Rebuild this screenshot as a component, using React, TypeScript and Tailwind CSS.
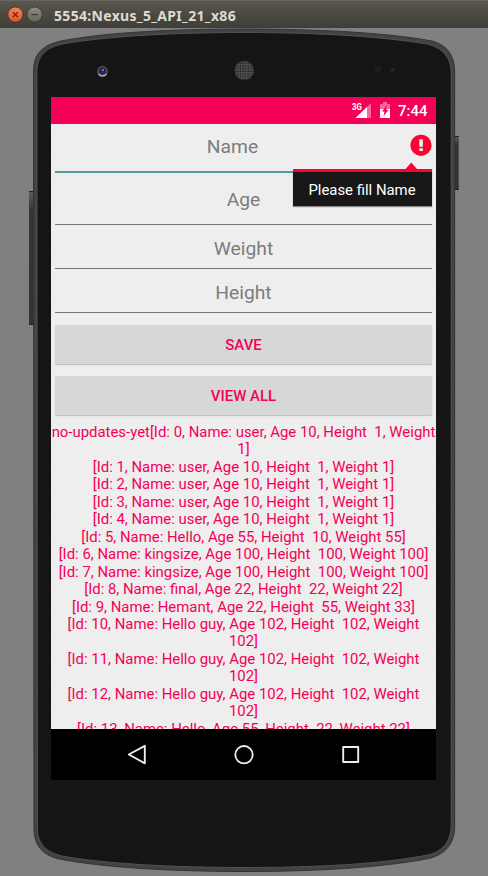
import React from "react";

const records = [
  "no-updates-yet[Id: 0, Name: user, Age 10, Height  1, Weight",
  "1]",
  "[Id: 1, Name: user, Age 10, Height  1, Weight 1]",
  "[Id: 2, Name: user, Age 10, Height  1, Weight 1]",
  "[Id: 3, Name: user, Age 10, Height  1, Weight 1]",
  "[Id: 4, Name: user, Age 10, Height  1, Weight 1]",
  "[Id: 5, Name: Hello, Age 55, Height  10, Weight 55]",
  "[Id: 6, Name: kingsize, Age 100, Height  100, Weight 100]",
  "[Id: 7, Name: kingsize, Age 100, Height  100, Weight 100]",
  "[Id: 8, Name: final, Age 22, Height  22, Weight 22]",
  "[Id: 9, Name: Hemant, Age 22, Height  55, Weight 33]",
  "[Id: 10, Name: Hello guy, Age 102, Height  102, Weight",
  "102]",
  "[Id: 11, Name: Hello guy, Age 102, Height  102, Weight",
  "102]",
  "[Id: 12, Name: Hello guy, Age 102, Height  102, Weight",
  "102]",
  "[Id: 13, Name: Hello, Age 55, Height  22, Weight 22]",
];

function TitleBar() {
  return (
    <header className="relative flex h-7 items-center border-t border-[#6a675f] bg-gradient-to-b from-[#59574e] to-[#3e3d37]">
      <svg width="50" height="27" viewBox="0 0 50 27">
        <defs>
          <linearGradient id="close" x1="0" y1="0" x2="0" y2="1">
            <stop offset="0" stopColor="#f68563" />
            <stop offset="1" stopColor="#e0501f" />
          </linearGradient>
          <linearGradient id="mini" x1="0" y1="0" x2="0" y2="1">
            <stop offset="0" stopColor="#8f8c82" />
            <stop offset="1" stopColor="#65635b" />
          </linearGradient>
        </defs>
        <circle cx="15.4" cy="13.6" r="7.6" fill="url(#close)" stroke="#37332d" strokeWidth=".8" />
        <path d="M12.9 11.1l5 5m0-5l-5 5" stroke="#48271b" strokeWidth="1.2" />
        <circle cx="34.6" cy="13.6" r="7.6" fill="url(#mini)" stroke="#37352f" strokeWidth=".8" />
        <path d="M31.3 13.6h6.6" stroke="#37352f" strokeWidth="1.2" />
      </svg>
      <h1 className="ml-[4px] mt-[2px] whitespace-nowrap font-['Noto_Sans',sans-serif] text-[14px] font-bold leading-none tracking-[0.32px] text-[#dfdbd2]">
        5554:Nexus_5_API_21_x86
      </h1>
    </header>
  );
}

const outline =
  "M33.5 72C33.5 53 43 45 61 41C108 32 176 29 244 29C322 29 389 33 432 41C447 45 454.7 55 454.7 72V826C454.7 845 444 854 431 858C382 868 312 871.5 244 871.5C176 871.5 106 868 59 859C42 855 34 845 34 828Z";
const face =
  "M36.9 73C36.9 56 45 48 62 44C108 36 176 32.5 244 32.5C322 32.5 385 37 427 44C443 48 451.2 57 451.2 74V825C451.2 842 442 851 430 854.5C382 864.5 312 867.5 244 867.5C176 867.5 106 864 62 856C45 852 37.4 843 37.4 828Z";

function DeviceBody() {
  return (
    <svg className="absolute left-0 top-0" width="488" height="876" viewBox="0 0 488 876">
      <defs>
        <linearGradient id="rail" x1="0" y1="0" x2="0" y2="1">
          <stop offset="0" stopColor="#5f6062" />
          <stop offset=".15" stopColor="#333437" />
          <stop offset="1" stopColor="#333" />
        </linearGradient>
        <pattern id="grain" width="3" height="3" patternUnits="userSpaceOnUse">
          <rect width="3" height="3" fill="#141414" />
          <path d="M0 .5h1M2 1.5h1M1 2.5h1" stroke="#171717" />
        </pattern>
        <pattern id="mesh" width="2.6" height="2.6" patternUnits="userSpaceOnUse">
          <rect width="2.6" height="2.6" fill="#5a5a5a" />
          <rect x=".4" y=".4" width="1.6" height="1.6" fill="#191919" />
        </pattern>
      </defs>
      <rect x="29" y="191" width="6" height="134" fill="url(#rail)" />
      <path d="M29 191.5h6M29 324.5h6" stroke="#222" />
      <rect x="453" y="136" width="5.7" height="54" fill="url(#rail)" />
      <path d="M454 136.5h5M454 189.5h5" stroke="#222" />
      <path d={outline} fill="#424345" />
      <path d={outline} fill="none" stroke="#333436" strokeWidth="1" />
      <path d={face} fill="url(#grain)" stroke="#505255" strokeWidth="1" />
      <circle cx="102.4" cy="71.2" r="5.4" fill="#4e4e52" />
      <path d="M98.5 74a5 5 0 0 0 8 0" fill="none" stroke="#a8a8a8" strokeWidth="1.3" />
      <circle cx="102.4" cy="70.8" r="3.5" fill="#24243f" />
      <circle cx="102" cy="71" r="1.9" fill="#25259a" />
      <circle cx="103" cy="70" r=".8" fill="#c8c8ee" />
      <circle cx="244.2" cy="70.5" r="9.6" fill="url(#mesh)" stroke="#303030" strokeWidth=".7" />
      <circle cx="378" cy="69.5" r="3.7" fill="#201c1d" />
      <circle cx="392.4" cy="69.8" r="2.5" fill="#1e1c1d" />
      <circle cx="392.4" cy="69.8" r="1" fill="#302d2e" />
    </svg>
  );
}

function StatusBar() {
  return (
    <div className="flex h-[27px] shrink-0 items-center justify-end bg-[#f50057] pr-[8.5px]">
      <svg width="41" height="27" viewBox="351 97 41 27">
        <path d="M371 103V118H355.5Z" fill="#fff" opacity=".4" />
        <path d="M367 107V118H355.5Z" fill="#fff" />
        <rect x="350" y="99" width="11.7" height="8.8" fill="#f50057" />
        <text x="352" y="109.7" fill="#fff" fontSize="9.4" fontWeight="700" textLength="9.8" lengthAdjust="spacingAndGlyphs">3G</text>
        <path d="M380 104h3v-2h4v2h3v5h-10Z" fill="#fff" opacity=".4" />
        <path d="M380 109h10v9h-10Z" fill="#fff" />
        <path d="M387 105L382 111.5h2.4L383.6 116l5-6.300H386Z" fill="#f50057" />
      </svg>
      <span className="ml-[6px] mt-[2px] text-[14.97px] font-medium leading-none text-white">7:44</span>
    </div>
  );
}

function ErrorPopup() {
  return (
    <div className="absolute left-[242px] top-[38px] z-10 w-[139px]">
      <svg className="block" width="139" height="7" viewBox="0 0 139 7">
        <path d="M112.5 7L118.3 .5L124 7Z" fill="#ff0033" />
      </svg>
      <div className="flex h-[37px] items-center justify-center border-t-[3px] border-[#ff0033] bg-[#171717] pr-px pt-[3px] text-[14.9px] text-white shadow-[0_1px_1px_#888]">
        Please fill Name
      </div>
    </div>
  );
}

function NameField() {
  return (
    <div className="relative mx-1 h-[49px] shrink-0 border-b-2 border-[#4f9d95]">
      <div className="flex h-[46px] items-center justify-center pr-[22px] text-[19.25px] text-[#7c7c7c]">Name</div>
      <svg className="absolute right-0 top-[10px]" width="22" height="22" viewBox="0 0 22 22">
        <circle cx="11" cy="11.3" r="10.6" fill="#ff0033" />
        <rect x="9.3" y="5.2" width="3.6" height="7.6" rx=".5" fill="#eee" />
        <rect x="9.3" y="14.3" width="3.6" height="2.7" rx=".5" fill="#eee" />
      </svg>
    </div>
  );
}

function Field({ label, first }: { label: string; first?: boolean }) {
  return (
    <div
      className={
        "mx-1 flex shrink-0 items-center justify-center border-b border-[#757575] text-[19.25px] text-[#7c7c7c] " +
        (first ? "h-[52px] pt-[4px]" : "h-[44px] pt-[5px]")
      }
    >
      {label}
    </div>
  );
}

function ActionButton({ label }: { label: string }) {
  return (
    <button className="mx-1 flex h-[39px] shrink-0 items-center justify-center rounded-[2px] bg-[#d6d8d7] pt-[2px] text-[14.97px] font-medium text-[#f50057] shadow-[0_1px_1px_#bbb]">
      {label}
    </button>
  );
}

function NavBar() {
  return (
    <nav className="flex h-[51px] shrink-0 items-center justify-center gap-[83px] bg-black">
      <svg width="24" height="24" viewBox="0 0 24 24" fill="none" stroke="#eee" strokeWidth="1.9" strokeLinejoin="round">
        <path d="M19.8 2.8V20.3L3.8 11.5Z" />
      </svg>
      <svg width="24" height="24" viewBox="0 0 24 24" fill="none" stroke="#eee" strokeWidth="1.8">
        <circle cx="12" cy="11.7" r="8.7" />
      </svg>
      <svg width="24" height="24" viewBox="0 0 24 24" fill="none" stroke="#eee" strokeWidth="1.9" strokeLinejoin="round">
        <rect x="4.2" y="4" width="15" height="15" />
      </svg>
    </nav>
  );
}

export default function App() {
  return (
    <div className="relative h-[876px] w-[488px] overflow-hidden bg-[#808080] font-[Roboto,sans-serif]">
      <DeviceBody />
      <TitleBar />
      <main className="relative ml-[51px] mt-[69px] flex h-[683px] w-[385px] flex-col bg-[#eee]">
        <StatusBar />
        <section className="relative flex h-[605px] shrink-0 flex-col overflow-hidden">
          <NameField />
          <ErrorPopup />
          <Field label="Age" first />
          <Field label="Weight" />
          <Field label="Height" />
          <div className="mt-[12px] flex shrink-0 flex-col gap-[12px]">
            <ActionButton label="SAVE" />
            <ActionButton label="VIEW ALL" />
          </div>
          <div className="mt-[9px] shrink-0 text-center text-[14.92px] leading-[17.45px] text-[#f50057]">
            {records.map((line, i) => (
              <p key={i} className="whitespace-pre">{line}</p>
            ))}
          </div>
        </section>
        <NavBar />
      </main>
    </div>
  );
}
